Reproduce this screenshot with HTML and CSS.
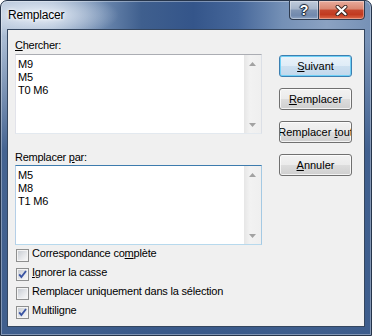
FILE: index.html
```html
<!DOCTYPE html>
<html lang="fr">
<head>
<meta charset="utf-8">
<title>Remplacer</title>
<link rel="stylesheet" href="styles.css">
</head>
<body>
<div class="window">
  <div class="titlebar">
    <span class="title">Remplacer</span>
    <div class="caption">
      <div class="cbtn help"><span class="qmark">?</span></div>
      <div class="cbtn close">
        <svg width="13" height="11" viewBox="0 0 13 11"><path d="M2.5 1.8 L10.5 9.2 M10.5 1.8 L2.5 9.2" stroke="#3a2622" stroke-width="4" stroke-linecap="round"/><path d="M2.5 1.8 L10.5 9.2 M10.5 1.8 L2.5 9.2" stroke="#ffffff" stroke-width="2.2" stroke-linecap="round"/></svg>
      </div>
    </div>
  </div>
  <div class="client">
    <div class="leftcol">
      <div class="lbl lbl1"><u>C</u>hercher:</div>
      <div class="edit">
        <div class="lines"><div>M9</div><div>M5</div><div>T0 M6</div></div>
        <div class="vscroll">
          <div class="sb"><svg width="7" height="4" viewBox="0 0 7 4"><polygon points="0,4 3.5,0 7,4" fill="#a2a2a2"/></svg></div>
          <div class="track"></div>
          <div class="sb"><svg width="7" height="4" viewBox="0 0 7 4"><polygon points="0,0 7,0 3.5,4" fill="#a2a2a2"/></svg></div>
        </div>
      </div>
      <div class="lbl lbl2">Remplacer <u>p</u>ar:</div>
      <div class="edit focus">
        <div class="lines"><div>M5</div><div>M8</div><div>T1 M6</div></div>
        <div class="vscroll">
          <div class="sb"><svg width="7" height="4" viewBox="0 0 7 4"><polygon points="0,4 3.5,0 7,4" fill="#a2a2a2"/></svg></div>
          <div class="track"></div>
          <div class="sb"><svg width="7" height="4" viewBox="0 0 7 4"><polygon points="0,0 7,0 3.5,4" fill="#a2a2a2"/></svg></div>
        </div>
      </div>
      <div class="checks">
        <div class="chk"><span class="box"></span><span class="ctext">Correspondance co<u>m</u>plète</span></div>
        <div class="chk"><span class="box"><svg class="tick" width="13" height="13" viewBox="0 0 13 13"><path d="M3.2 6.3 L5.4 9 L10 3" fill="none" stroke="#3b55a3" stroke-width="1.9"/></svg></span><span class="ctext"><u>I</u>gnorer la casse</span></div>
        <div class="chk"><span class="box"></span><span class="ctext">Remplacer uniquement dans la sélection</span></div>
        <div class="chk"><span class="box"><svg class="tick" width="13" height="13" viewBox="0 0 13 13"><path d="M3.2 6.3 L5.4 9 L10 3" fill="none" stroke="#3b55a3" stroke-width="1.9"/></svg></span><span class="ctext">Multiligne</span></div>
      </div>
    </div>
    <div class="rightcol">
      <button class="btn default"><span><u>S</u>uivant</span></button>
      <button class="btn"><span><u>R</u>emplacer</span></button>
      <button class="btn"><span>Remplacer <u>t</u>out</span></button>
      <button class="btn"><span><u>A</u>nnuler</span></button>
    </div>
  </div>
</div>
</body>
</html>
```

FILE: styles.css
```css
* { box-sizing: border-box; }
html, body { margin: 0; padding: 0; }
body {
  width: 372px;
  height: 336px;
  overflow: hidden;
  background: #ffffff;
  font-family: "Liberation Sans", Arial, sans-serif;
  color: #000;
}
.window {
  width: 372px;
  height: 336px;
  border: 1px solid #25344a;
  border-radius: 7px 7px 0 0;
  display: flex;
  flex-direction: column;
  background:
    linear-gradient(to bottom, rgba(58, 88, 134, 0) 0px, rgba(58, 88, 134, 0) 40px, rgba(58, 90, 138, 0.9) 150px, rgba(58, 90, 138, 0.95) 336px),
    radial-gradient(ellipse 80px 24px at 38px 14px, rgba(236, 242, 250, 0.95), rgba(236, 242, 250, 0) 100%),
    linear-gradient(90deg, #a9bbd2 0%, #9fb3cd 14%, #6e8ab0 27%, #3f5f8e 38%, #34558a 52%, #46679a 64%, #7490b6 76%, #8ba2c2 88%, #7691b6 100%);
  box-shadow: inset 0 0 0 1px rgba(255, 255, 255, 0.35);
}
.titlebar {
  height: 28px;
  flex: none;
  display: flex;
  justify-content: space-between;
  align-items: flex-start;
  padding: 0 6px 0 7px;
}
.title {
  margin-top: 7px;
  font-size: 12px;
  line-height: 15px;
  letter-spacing: -0.2px;
  text-shadow: 0 0 5px #fff, 0 0 3px rgba(255,255,255,0.9);
}
.caption {
  display: flex;
  margin-top: -1px;
}
.cbtn {
  height: 20px;
  border: 1px solid #2d3a4e;
  display: flex;
  align-items: center;
  justify-content: center;
  box-shadow: inset 0 0 0 1px rgba(255, 255, 255, 0.35);
}
.help {
  width: 29px;
  border-right: none;
  border-radius: 0 0 0 4px;
  background: linear-gradient(#bfcbdb 0%, #a6b5ca 45%, #8095b4 50%, #7189ad 80%, #8ca2c1 100%);
}
.qmark {
  font: bold 14px/14px "Liberation Sans", Arial, sans-serif;
  color: #fff;
  text-shadow: 0 0 1px #1d2838, 1px 0 1px #1d2838, -1px 0 1px #1d2838, 0 1px 1px #1d2838, 0 -1px 1px #1d2838;
}
.close {
  width: 47px;
  border-radius: 0 0 4px 0;
  background: linear-gradient(#e8ab9c 0%, #d98771 45%, #c6472e 50%, #c23a20 75%, #dd6a4a 100%);
}
.client {
  margin: 0 6px;
  height: 298px;
  flex: none;
  border: 1px solid #34465f;
  background: #f0f0f0;
  display: flex;
  align-items: flex-start;
  padding: 9px 0 0 7px;
}
.leftcol {
  width: 247px;
  display: flex;
  flex-direction: column;
}
.lbl {
  font-size: 11px;
  line-height: 13px;
  height: 13px;
  letter-spacing: -0.25px;
}
.lbl1 { margin-bottom: 2px; }
.lbl2 { margin-top: 17px; margin-bottom: 1px; }
.edit {
  height: 80px;
  border: 1px solid;
  border-color: #abadb3 #dbdfe6 #e3e9ef #e2e3ea;
  background: #fff;
  display: flex;
}
.edit.focus {
  border-color: #3d7bad #a4c9e3 #b7d9ed #b5cfe7;
}
.lines {
  flex: 1;
  padding: 3px 0 0 2px;
  font-size: 11px;
  line-height: 13px;
  letter-spacing: -0.2px;
}
.vscroll {
  width: 17px;
  display: flex;
  flex-direction: column;
  background: linear-gradient(90deg, #e6e6e6 0%, #f2f2f2 35%, #efefef 100%);
}
.sb {
  height: 17px;
  display: flex;
  align-items: center;
  justify-content: center;
}
.sb svg { display: block; }
.track { flex: 1; }
.checks {
  margin-top: 2px;
  padding-left: 1px;
}
.chk {
  display: flex;
  align-items: flex-start;
  height: 19px;
  font-size: 11px;
  line-height: 13px;
  letter-spacing: -0.2px;
}
.box {
  width: 13px;
  height: 13px;
  margin-top: 2px;
  margin-right: 3px;
  flex: none;
  border: 1px solid #8e8f8f;
  padding: 1px;
  background: linear-gradient(135deg, #c9cdd3 0%, #e4e6e9 55%, #f7f7f7 100%) content-box, #f4f4f4;
  display: flex;
}
.tick {
  display: block;
  margin: -2px;
  flex: none;
}
.rightcol {
  margin-left: 17px;
  margin-top: 16px;
  display: flex;
  flex-direction: column;
  gap: 11px;
}
.btn {
  width: 73px;
  height: 22px;
  padding: 0;
  margin: 0;
  border: 1px solid #707070;
  border-radius: 3px;
  background: linear-gradient(#f2f2f2 0%, #ebebeb 50%, #dddddd 50%, #cfcfcf 100%);
  box-shadow: inset 0 0 0 1px rgba(255, 255, 255, 0.75);
  display: flex;
  align-items: center;
  justify-content: center;
  overflow: hidden;
  white-space: nowrap;
  font: 11px/13px "Liberation Sans", Arial, sans-serif;
  letter-spacing: 0;
  color: #000;
}
.btn span { flex: none; }
.btn.default {
  border-color: #3c7fb1;
  background: linear-gradient(#eaf3fa 0%, #dfecf7 50%, #cde0f0 50%, #c2d8ec 100%);
  box-shadow: inset 0 0 0 1px #6fd0f6;
}
```
